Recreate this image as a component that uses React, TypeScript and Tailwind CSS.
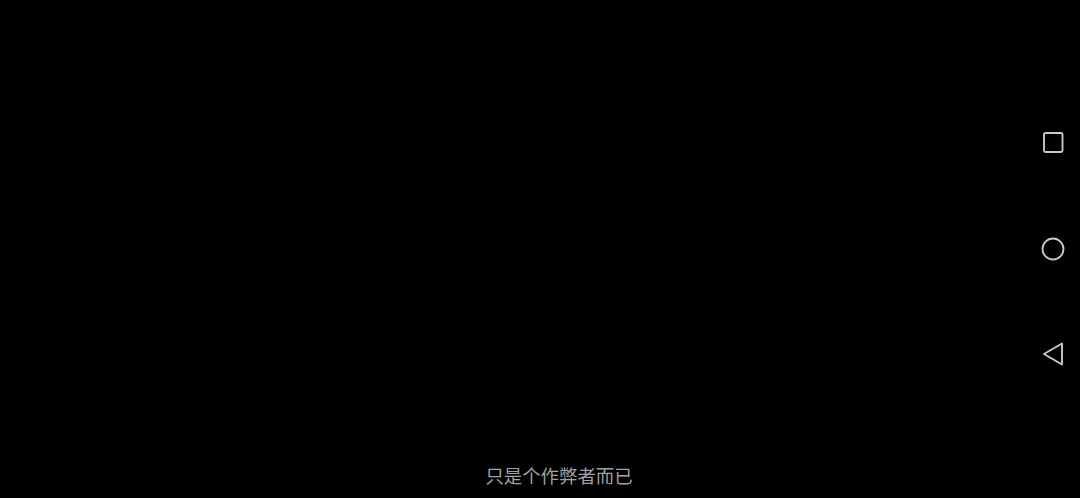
export default function App() {
  return (
    <div className="w-[1080px] h-[498px] overflow-hidden bg-black flex font-['Noto_Sans_CJK_SC',sans-serif]">
      {/* video area with the subtitle at the bottom */}
      <div className="flex-1 flex flex-col justify-end items-center pl-[92px] pb-[11px]">
        <p className="text-[18.4px] leading-[24px] text-[#a0a0a0]">只是个作弊者而已</p>
      </div>

      {/* android nav bar */}
      <div className="w-[54px] flex flex-col items-center pt-[131px] text-[#c8c8c8]">
        <svg width="22" height="23" viewBox="0 0 22 23" fill="none" stroke="currentColor" strokeWidth="1.9">
          <rect x="2" y="2" width="18.5" height="19" rx="1.5" />
        </svg>
        <svg className="mt-[83px]" width="24" height="24" viewBox="0 0 24 24" fill="none" stroke="currentColor" strokeWidth="1.9">
          <circle cx="12" cy="12" r="10.5" />
        </svg>
        <svg className="mt-[80px]" width="22" height="26" viewBox="0 0 22 26" fill="none" stroke="currentColor" strokeWidth="1.9" strokeLinejoin="round">
          <path d="M2 13 L20 2.5 V23.5 Z" />
        </svg>
      </div>
    </div>
  );
}
